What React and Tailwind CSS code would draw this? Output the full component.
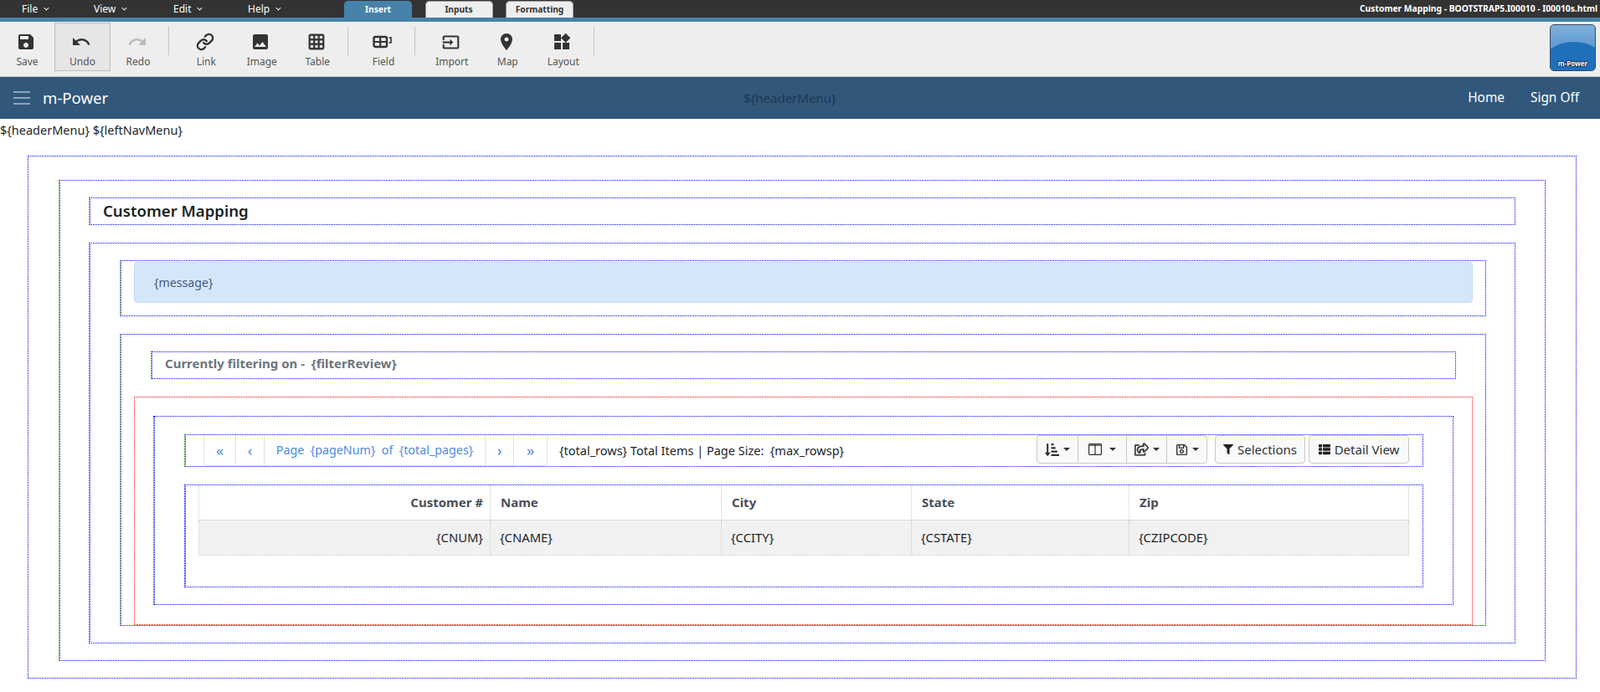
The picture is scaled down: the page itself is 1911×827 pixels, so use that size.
import { Link } from "lucide-react";
import {
  FaSortAmountDownAlt,
  FaRegShareSquare,
  FaRegSave,
  FaFilter,
  FaThList,
} from "react-icons/fa";

const ICONS = {
  save: "M17 3H5c-1.11 0-2 .9-2 2v14c0 1.1.89 2 2 2h14c1.1 0 2-.9 2-2V7l-4-4zm-5 16c-1.66 0-3-1.34-3-3s1.34-3 3-3 3 1.34 3 3-1.34 3-3 3zm3-10H5V5h10v4z",
  undo: "M12.5 8c-2.65 0-5.05.99-6.9 2.6L2 7v9h9l-3.62-3.62c1.39-1.16 3.16-1.88 5.12-1.88 3.54 0 6.55 2.31 7.6 5.5l2.37-.78C21.08 11.03 17.15 8 12.5 8z",
  redo: "M18.4 10.6C16.55 8.99 14.15 8 11.5 8c-4.65 0-8.58 3.03-9.96 7.22L3.9 16c1.05-3.19 4.05-5.5 7.6-5.5 1.95 0 3.73.72 5.12 1.88L13 16h9V7l-3.6 3.6z",
  image:
    "M21 19V5c0-1.1-.9-2-2-2H5c-1.1 0-2 .9-2 2v14c0 1.1.9 2 2 2h14c1.1 0 2-.9 2-2zM8.5 13.5l2.5 3.01L14.5 12l4.5 6H5l3.5-4.5z",
  table:
    "M20 2H4c-1.1 0-2 .9-2 2v16c0 1.1.9 2 2 2h16c1.1 0 2-.9 2-2V4c0-1.1-.9-2-2-2zM8 20H4v-4h4v4zm0-6H4v-4h4v4zm0-6H4V4h4v4zm6 12h-4v-4h4v4zm0-6h-4v-4h4v4zm0-6h-4V4h4v4zm6 12h-4v-4h4v4zm0-6h-4v-4h4v4zm0-6h-4V4h4v4z",
  import:
    "M21 3.01H3c-1.1 0-2 .9-2 2V9h2V4.99h18v14.03H3V15H1v4.01c0 1.1.9 1.98 2 1.98h18c1.1 0 2-.88 2-1.98v-14c0-1.11-.9-2-2-2zM11 16l4-4-4-4v3H1v2h10v3z",
  map: "M12 2C8.13 2 5 5.13 5 9c0 5.25 7 13 7 13s7-7.75 7-13c0-3.87-3.13-7-7-7zm0 9.5c-1.38 0-2.5-1.12-2.5-2.5s1.12-2.5 2.5-2.5 2.5 1.12 2.5 2.5-1.12 2.5-2.5 2.5z",
  layout:
    "M13 13v8h8v-8h-8zM3 21h8v-8H3v8zM3 3v8h8V3H3zm13.66-1.31L11 7.34 16.66 13l5.66-5.66-5.66-5.65z",
};

const ICON_SIZE = {
  table: "h-[22px] w-[22px] stroke-current stroke-[0.5]",
  import: "h-[21px] w-[21px] stroke-current stroke-[0.4]",
};

const TablerIcon = ({ name }) => (
  <svg viewBox="0 0 24 24" className={ICON_SIZE[name] || "h-6 w-6"} fill="currentColor">
    <path d={ICONS[name]} />
  </svg>
);

const FieldIcon = () => (
  <svg viewBox="0 0 24 24" className="h-6 w-6 text-[#333]" fill="none">
    <rect x="1.5" y="6" width="15.5" height="12" rx="2" stroke="currentColor" strokeWidth="2.4" />
    <path d="M1.5 12h15.5M9.2 6v12" stroke="currentColor" strokeWidth="2.2" />
    <path d="M19.5 7h2.5v6h-2.5" stroke="currentColor" strokeWidth="1.6" />
  </svg>
);

const ToolItem = ({ label, icon, width = "w-[66.5px]", active, muted }) => (
  <div
    className={`flex h-[58px] shrink-0 flex-col items-center justify-start ${width} ${
      active ? "border border-[#bdbdbd] bg-[#e6e6e6] pt-[10px]" : "pt-[11px]"
    }`}
  >
    <span className={`-ml-[3px] flex h-6 items-center ${muted ? "text-[#bbb]" : "text-[#333]"}`}>
      {icon === "link" ? (
        <Link className="h-[22px] w-[22px]" strokeWidth={2.6} />
      ) : icon === "field" ? (
        <FieldIcon />
      ) : (
        <TablerIcon name={icon} />
      )}
    </span>
    <span className="mt-[3px] text-[12px] leading-[18px] text-[#555]">{label}</span>
  </div>
);

const Sep = ({ className = "" }) => (
  <div className={`mt-[5px] h-[34px] w-px shrink-0 bg-[#c4c4c4] ${className}`} />
);

const MenuItem = ({ label, width }) => (
  <div className={`flex items-center gap-[7px] text-[12px] text-white ${width}`}>
    {label}
    <svg viewBox="0 0 10 6" className="h-[5px] w-[7px]" fill="none" stroke="#e5e5e5" strokeWidth="1.5">
      <path d="M1 1l4 4 4-4" />
    </svg>
  </div>
);

const Tab = ({ label, active }) => (
  <div
    className={`mt-px flex h-5 w-[81px] items-center justify-center rounded-t-[5px] border border-b-0 border-[#999] font-['Liberation_Sans',sans-serif] text-[10.2px] font-bold ${
      active ? "border-[#4682a9] bg-[#4682a9] text-white" : "bg-[#eeeeee] text-[#333]"
    }`}
  >
    {label}
  </div>
);

// dotted design-time outlines, "left" is the extra edge drawn by the nested container
const Box = ({ border = "border-[#0000ff]", left = "border-l-[#008000]", className = "", children }) => (
  <div className={`border-l border-dotted ${left}`}>
    <div className={`border border-dotted ${border} ${className}`}>{children}</div>
  </div>
);

const Caret = () => (
  <span className="ml-[5px] inline-block h-0 w-0 border-x-[4.5px] border-t-[4.5px] border-x-transparent border-t-[#333]" />
);

const PageCell = ({ children, className = "" }) => (
  <div className={`flex h-full items-center justify-center border-r border-[#dee2e6] text-[#4d8be0] last:border-r-0 ${className}`}>
    {children}
  </div>
);

const GroupBtn = ({ children, width }) => (
  <div className={`flex h-full items-center justify-center border-r border-[#c8c8c8] last:border-r-0 ${width}`}>
    {children}
    <Caret />
  </div>
);

const COLUMNS = [
  { head: "Customer #", cell: "{CNUM}", width: "w-[348px]", align: "text-right" },
  { head: "Name", cell: "{CNAME}", width: "w-[276px]", align: "text-left" },
  { head: "City", cell: "{CCITY}", width: "w-[227px]", align: "text-left" },
  { head: "State", cell: "{CSTATE}", width: "w-[260px]", align: "text-left" },
  { head: "Zip", cell: "{CZIPCODE}", width: "w-[334px]", align: "text-left" },
];

const App = () => {
  return (
    <div className="min-h-[827px] overflow-hidden bg-white pb-4 font-['Open_Sans',sans-serif] text-[14px] text-[#212529]">
      {/* menu bar */}
      <div className="flex h-[21px] items-start bg-[#333333] font-['DejaVu_Sans',sans-serif]">
        <div className="flex h-full items-center pl-[26px]">
          <MenuItem label="File" width="w-[86px]" />
          <MenuItem label="View" width="w-[95px]" />
          <MenuItem label="Edit" width="w-[89px]" />
          <MenuItem label="Help" width="w-[115px]" />
        </div>
        <div className="flex gap-[15.5px]">
          <Tab label="Insert" active />
          <Tab label="Inputs" />
          <Tab label="Formatting" />
        </div>
        <div className="ml-auto flex h-full items-center pr-[3px] font-['Liberation_Sans',sans-serif] text-[10.3px] font-bold text-white">
          Customer Mapping - BOOTSTRAP5.I00010 - I00010s.html
        </div>
      </div>
      <div className="h-[5px] bg-[#4682a9]" />

      {/* toolbar */}
      <div className="flex h-[66px] items-start border-b border-[#c8c8c8] bg-[#eeeeee] pt-px font-['DejaVu_Sans',sans-serif]">
        <ToolItem label="Save" icon="save" width="w-[65px]" />
        <ToolItem label="Undo" icon="undo" width="w-[67px]" active />
        <ToolItem label="Redo" icon="redo" width="w-[66px]" muted />
        <Sep className="ml-[3px] mr-[11px]" />
        <ToolItem label="Link" icon="link" />
        <ToolItem label="Image" icon="image" />
        <ToolItem label="Table" icon="table" />
        <Sep className="ml-[2px]" />
        <ToolItem label="Field" icon="field" width="w-[79px] pl-[6px]" />
        <Sep className="mr-[11px]" />
        <ToolItem label="Import" icon="import" />
        <ToolItem label="Map" icon="map" />
        <ToolItem label="Layout" icon="layout" />
        <Sep className="ml-[3px]" />
        <div className="relative ml-auto mr-[5px] mt-[2px] h-[56px] w-[55px] overflow-hidden rounded-[5px] border border-[#3a4a5c] bg-gradient-to-b from-[#7fb0dc] to-[#3c84c4]">
          <div className="absolute -left-[12px] top-[20px] h-[60px] w-[79px] rounded-[50%] bg-[#1f6fbb]" />
          <span className="absolute inset-x-0 bottom-[3px] text-center font-['Liberation_Sans',sans-serif] text-[8px] font-bold leading-[10px] text-white [text-shadow:0_0_2px_#000,0_0_2px_#000]">
            m-Power
          </span>
        </div>
      </div>

      {/* navbar */}
      <div className="relative flex h-[50px] items-center bg-[#31577b] pl-4 pr-[25px] text-white">
        <div className="flex w-5 flex-col gap-[5px]">
          <span className="h-[2px] bg-[#8ea4b8]" />
          <span className="h-[2px] bg-[#8ea4b8]" />
          <span className="h-[2px] bg-[#8ea4b8]" />
        </div>
        <span className="ml-[15px] text-[18.6px]">m-Power</span>
        <span className="absolute left-[888px] text-[15px] text-[#1c3853]">{"${headerMenu}"}</span>
        <div className="ml-auto flex gap-[31px] text-[15.4px]">
          <span>Home</span>
          <span>Sign Off</span>
        </div>
      </div>

      <div className="h-[24px] text-[14.5px] leading-[26px]">{"${headerMenu} ${leftNavMenu}"}</div>

      {/* design-time containers */}
      <div className="ml-[33px] mr-[28px] mt-5">
        <div className="border border-dotted border-[#0000ff] px-9 pb-5 pt-7">
          <Box className="flex flex-col gap-[21px] py-5 pl-[34px] pr-[35px]">
            <Box className="flex h-[33px] items-center pb-[2px] pl-[15px]">
              <h1 className="text-[18.6px] font-semibold text-[#1a1f24]">Customer Mapping</h1>
            </Box>

            <Box left="border-l-[#0000ff]" className="flex flex-col gap-[21px] py-5 pl-[35px] pr-[34px]">
              <Box className="h-[67px] pl-[15px] pr-[15px] pt-px">
                <div className="flex h-[49px] items-center rounded border border-[#c6dbf5] bg-[#d6e6f9] pl-[23px] text-[14.2px] text-[#3d5a80]">
                  {"{message}"}
                </div>
              </Box>

              <Box className="flex flex-col gap-[21px] pb-0 pl-[15px] pr-[15px] pt-5">
                <div className="pl-5 pr-5">
                  <Box className="flex h-[33px] items-center pb-[4px] pl-[15px]">
                    <span className="text-[15px] font-bold text-[#6c757d]">
                      {"Currently filtering on -\u00a0 {filterReview}"}
                    </span>
                  </Box>
                </div>

                <div className="border border-dotted border-[#ff0000] pb-[23px] pl-[22px] pr-[22px] pt-[22px]">
                  <Box className="flex flex-col gap-[21px] pb-5 pl-[35px] pr-[35px] pt-[21px]">
                    <Box className="flex h-[39px] items-start justify-between pl-[21px] pr-[16px]">
                      <div className="flex items-start">
                        <div className="flex h-[37px] items-center rounded-b border-x border-b border-[#dee2e6]">
                          <PageCell className="w-[38px] text-[18px]">«</PageCell>
                          <PageCell className="w-[34px] text-[18px]">‹</PageCell>
                          <PageCell className="w-[264px] text-[14.3px]">
                            {"Page\u00a0 {pageNum}\u00a0 of\u00a0 {total_pages}"}
                          </PageCell>
                          <PageCell className="w-[34px] text-[18px]">›</PageCell>
                          <PageCell className="w-[39px] text-[18px]">»</PageCell>
                        </div>
                        <span className="ml-[14px] mt-2 text-[14.5px] leading-5">
                          {"{total_rows} Total Items | Page Size:\u00a0 {max_rowsp}"}
                        </span>
                      </div>

                      <div className="flex h-[34px] items-center text-[15px] text-[#333]">
                        <div className="mr-[9px] flex h-full items-center rounded border border-[#c8c8c8] bg-[#f8f9fa]">
                          <GroupBtn width="w-[49px]">
                            <FaSortAmountDownAlt className="h-[17px] w-[17px]" />
                          </GroupBtn>
                          <GroupBtn width="w-[58px]">
                            <svg viewBox="0 0 16 14" className="mr-1 h-[14px] w-[16px]" fill="none" stroke="currentColor" strokeWidth="1.2">
                              <rect x="0.6" y="0.6" width="14.8" height="12.8" rx="1" />
                              <path d="M8 1v12M1 2.2h14" />
                            </svg>
                          </GroupBtn>
                          <GroupBtn width="w-[48px]">
                            <FaRegShareSquare className="h-[16px] w-[17px] stroke-current stroke-[14]" />
                          </GroupBtn>
                          <GroupBtn width="w-[47px]">
                            <FaRegSave className="h-[15px] w-[15px]" />
                          </GroupBtn>
                        </div>
                        <div className="mr-[4px] flex h-full w-[108px] items-center justify-center gap-[5px] rounded border border-[#c8c8c8] bg-[#f8f9fa]">
                          <FaFilter className="h-3 w-3 text-[#222]" />
                          Selections
                        </div>
                        <div className="flex h-full w-[120px] items-center justify-center gap-[5px] rounded border border-[#c8c8c8] bg-[#f8f9fa]">
                          <FaThList className="h-[14px] w-[14px] text-[#222]" />
                          Detail View
                        </div>
                      </div>
                    </Box>

                    <Box left="border-l-[#0000ff]" className="h-[123px] pl-[15px] pr-[16px]">
                      <table className="w-full table-fixed border-collapse">
                        <colgroup>
                          {COLUMNS.map((col) => (
                            <col key={col.head} className={col.width} />
                          ))}
                        </colgroup>
                        <tbody>
                          <tr className="h-[41px]">
                            {COLUMNS.map((col) => (
                              <th
                                key={col.head}
                                className={`border border-t-0 border-dotted border-[#c8c8c8] pl-3 pr-2 text-[15px] font-bold text-[#495057] ${col.align}`}
                              >
                                {col.head}
                              </th>
                            ))}
                          </tr>
                          <tr className="h-[42px] bg-[#f1f1f1]">
                            {COLUMNS.map((col) => (
                              <td
                                key={col.head}
                                className={`border border-dotted border-[#c8c8c8] pl-[11px] pr-2 text-[14.8px] text-[#212529] ${col.align}`}
                              >
                                {col.cell}
                              </td>
                            ))}
                          </tr>
                        </tbody>
                      </table>
                    </Box>
                  </Box>
                </div>
              </Box>
            </Box>
          </Box>
        </div>
      </div>
    </div>
  );
};

export default App;
